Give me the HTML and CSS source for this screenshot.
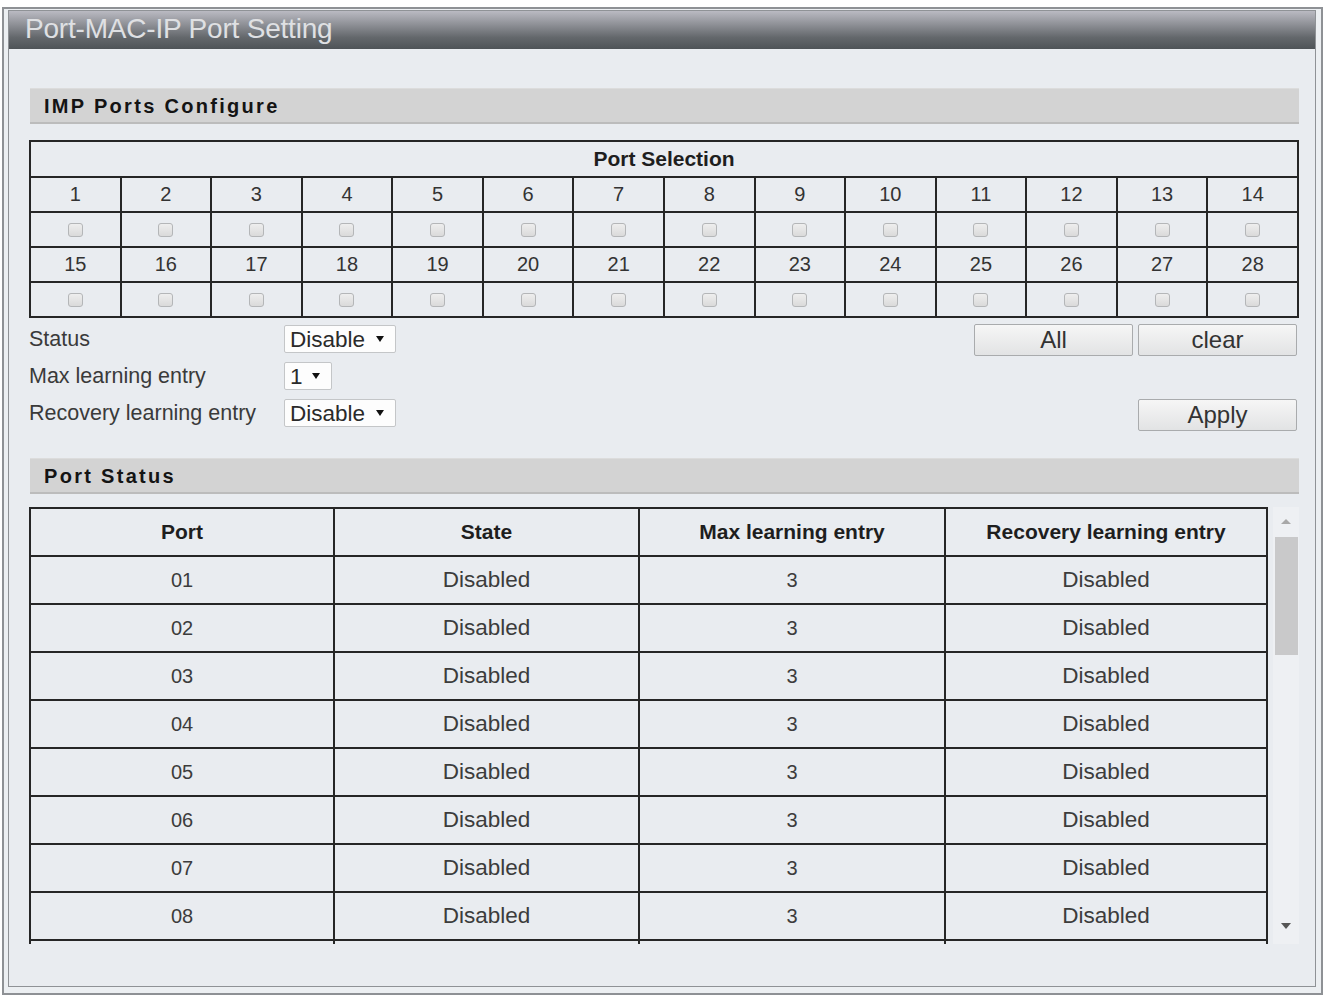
FILE: index.html
```html
<!DOCTYPE html>
<html lang="en">
<head>
    <meta charset="UTF-8">
    <meta name="viewport" content="width=device-width, initial-scale=1.0">
    <title>Port-MAC-IP Port Setting</title>
    <link rel="stylesheet" href="styles.css">
</head>
<body>

    <div class="window">
        <div class="panel">
            <div class="title-bar">Port-MAC-IP Port Setting</div>

            <div class="content">
                <!-- Configuracion de puertos -->
                <div class="section-bar">IMP Ports Configure</div>

                <table class="port-select">
                    <tr class="head-row"><th colspan="14">Port Selection</th></tr>
                    <tr class="num-row">
                        <td>1</td><td>2</td><td>3</td><td>4</td><td>5</td><td>6</td><td>7</td>
                        <td>8</td><td>9</td><td>10</td><td>11</td><td>12</td><td>13</td><td>14</td>
                    </tr>
                    <tr class="chk-row">
                        <td><input type="checkbox"></td><td><input type="checkbox"></td><td><input type="checkbox"></td><td><input type="checkbox"></td><td><input type="checkbox"></td><td><input type="checkbox"></td><td><input type="checkbox"></td>
                        <td><input type="checkbox"></td><td><input type="checkbox"></td><td><input type="checkbox"></td><td><input type="checkbox"></td><td><input type="checkbox"></td><td><input type="checkbox"></td><td><input type="checkbox"></td>
                    </tr>
                    <tr class="num-row">
                        <td>15</td><td>16</td><td>17</td><td>18</td><td>19</td><td>20</td><td>21</td>
                        <td>22</td><td>23</td><td>24</td><td>25</td><td>26</td><td>27</td><td>28</td>
                    </tr>
                    <tr class="chk-row">
                        <td><input type="checkbox"></td><td><input type="checkbox"></td><td><input type="checkbox"></td><td><input type="checkbox"></td><td><input type="checkbox"></td><td><input type="checkbox"></td><td><input type="checkbox"></td>
                        <td><input type="checkbox"></td><td><input type="checkbox"></td><td><input type="checkbox"></td><td><input type="checkbox"></td><td><input type="checkbox"></td><td><input type="checkbox"></td><td><input type="checkbox"></td>
                    </tr>
                </table>

                <div class="form-area">
                    <div class="form-fields">
                        <div class="field">
                            <label for="status">Status</label>
                            <div class="select wide">
                                <select id="status">
                                    <option>Disable</option>
                                    <option>Enable</option>
                                </select>
                            </div>
                        </div>
                        <div class="field">
                            <label for="max-entry">Max learning entry</label>
                            <div class="select narrow">
                                <select id="max-entry">
                                    <option>1</option>
                                    <option>2</option>
                                    <option>3</option>
                                    <option>4</option>
                                    <option>5</option>
                                </select>
                            </div>
                        </div>
                        <div class="field">
                            <label for="recovery">Recovery learning entry</label>
                            <div class="select wide">
                                <select id="recovery">
                                    <option>Disable</option>
                                    <option>Enable</option>
                                </select>
                            </div>
                        </div>
                    </div>
                    <div class="form-buttons">
                        <div class="btn-row">
                            <button>All</button>
                            <button>clear</button>
                        </div>
                        <div class="btn-row">
                            <button>Apply</button>
                        </div>
                    </div>
                </div>

                <!-- Estado de puertos -->
                <div class="section-bar">Port Status</div>

                <div class="status-box">
                    <div class="status-scroll">
                        <table class="port-status">
                            <tr>
                                <th class="col-port">Port</th>
                                <th class="col-state">State</th>
                                <th class="col-max">Max learning entry</th>
                                <th>Recovery learning entry</th>
                            </tr>
                            <tr><td class="num">01</td><td>Disabled</td><td class="num">3</td><td>Disabled</td></tr>
                            <tr><td class="num">02</td><td>Disabled</td><td class="num">3</td><td>Disabled</td></tr>
                            <tr><td class="num">03</td><td>Disabled</td><td class="num">3</td><td>Disabled</td></tr>
                            <tr><td class="num">04</td><td>Disabled</td><td class="num">3</td><td>Disabled</td></tr>
                            <tr><td class="num">05</td><td>Disabled</td><td class="num">3</td><td>Disabled</td></tr>
                            <tr><td class="num">06</td><td>Disabled</td><td class="num">3</td><td>Disabled</td></tr>
                            <tr><td class="num">07</td><td>Disabled</td><td class="num">3</td><td>Disabled</td></tr>
                            <tr><td class="num">08</td><td>Disabled</td><td class="num">3</td><td>Disabled</td></tr>
                            <tr class="filler"><td></td><td></td><td></td><td></td></tr>
                        </table>
                    </div>
                    <div class="scrollbar">
                        <div class="arrow-box top"><span class="arrow up"></span></div>
                        <div class="thumb"></div>
                        <div class="track"></div>
                        <div class="arrow-box bottom"><span class="arrow down"></span></div>
                    </div>
                </div>
            </div>
        </div>
    </div>

</body>
</html>
```

FILE: styles.css
```css
body {
    font-family: "Liberation Sans", Arial, sans-serif;
    background-color: #ffffff;
    margin: 0;
    padding: 0;
}
.window {
    margin: 7px 3px 0 2px;
    border: 2px solid #8e9195;
    padding: 1px 5px 6px 4px;
    background-color: #eceff2;
}
.panel {
    border: 1px solid #8f9296;
    background-color: #e9ecf0;
}
.title-bar {
    height: 38px;
    line-height: 36px;
    padding-left: 16px;
    font-size: 28px;
    letter-spacing: -0.2px;
    color: #dfe0e3;
    background: linear-gradient(to bottom, #babac2 0%, #8f9197 35%, #63676b 70%, #4e5357 100%);
}
.content {
    padding: 39px 16px 42px 20px;
}
.section-bar {
    height: 33px;
    line-height: 34px;
    margin-left: 1px;
    padding-left: 14px;
    background-color: #d3d3d3;
    border-top: 1px solid #dcdcdc;
    border-bottom: 2px solid #bcbcbc;
    font-size: 20px;
    font-weight: bold;
    letter-spacing: 2.3px;
    color: #141414;
}
table {
    border-collapse: collapse;
    table-layout: fixed;
    width: 100%;
}
.port-select {
    margin-top: 16px;
}
.port-select th, .port-select td {
    border: 2px solid #262626;
    text-align: center;
    padding: 0;
    color: #333;
}
.port-select .head-row {
    height: 36px;
}
.port-select th {
    font-size: 21px;
    font-weight: bold;
    color: #1e1e1e;
}
.num-row {
    height: 35px;
    font-size: 20px;
}
.chk-row {
    height: 35px;
}
input[type="checkbox"] {
    appearance: none;
    -webkit-appearance: none;
    display: block;
    margin: 0 auto;
    width: 15px;
    height: 14px;
    border: 1px solid #b4b6b8;
    border-radius: 3px;
    background: linear-gradient(to bottom, #eeeeee, #dadada);
}
.form-area {
    display: flex;
    justify-content: space-between;
    margin-top: 6px;
    height: 107px;
    margin-bottom: 27px;
}
.form-fields {
    display: flex;
    flex-direction: column;
    gap: 9px;
    padding-top: 1px;
}
.field {
    display: flex;
    align-items: center;
    height: 28px;
}
.field label {
    width: 255px;
    font-size: 21.5px;
    color: #3a3a3a;
}
.select {
    position: relative;
    height: 28px;
}
.select select {
    appearance: none;
    -webkit-appearance: none;
    height: 28px;
    padding: 0 0 0 5px;
    border: 1px solid #c4c6c8;
    border-radius: 2px;
    background-color: #fdfdfd;
    font-family: "Liberation Sans", Arial, sans-serif;
    font-size: 22.5px;
    color: #2a2a2a;
}
.select.wide select {
    width: 112px;
}
.select.narrow select {
    width: 48px;
}
.select::after {
    content: "";
    position: absolute;
    top: 11px;
    right: 12px;
    border-left: 4px solid transparent;
    border-right: 4px solid transparent;
    border-top: 6px solid #111;
    pointer-events: none;
}
.form-buttons {
    display: flex;
    flex-direction: column;
    align-items: flex-end;
    justify-content: space-between;
    padding-right: 2px;
}
.btn-row {
    display: flex;
    gap: 5px;
}
button {
    width: 159px;
    height: 32px;
    padding: 0;
    border: 1px solid #a9abad;
    border-radius: 2px;
    background: linear-gradient(to bottom, #f6f6f6, #e2e3e4);
    font-family: "Liberation Sans", Arial, sans-serif;
    font-size: 24px;
    color: #333;
    cursor: pointer;
}
button:hover {
    background: linear-gradient(to bottom, #ffffff, #e8e9ea);
}
.status-box {
    display: flex;
    margin-top: 13px;
    height: 437px;
}
.status-scroll {
    flex: 1;
    overflow: hidden;
    margin-right: 5px;
}
.port-status th, .port-status td {
    border: 2px solid #262626;
    height: 46px;
    text-align: center;
    padding: 0;
    font-size: 22.5px;
    color: #3c3c3c;
}
.port-status td.num {
    font-size: 20px;
}
.port-status th {
    font-size: 21px;
    font-weight: bold;
    color: #1e1e1e;
}
.port-status .filler td {
    border-bottom: none;
}
.col-port {
    width: 302px;
}
.col-state {
    width: 303px;
}
.col-max {
    width: 304px;
}
.scrollbar {
    width: 26px;
    display: flex;
    flex-direction: column;
    background-color: #eef0f3;
}
.arrow-box {
    display: flex;
    justify-content: center;
}
.arrow-box.top {
    height: 30px;
    padding-top: 12px;
    box-sizing: border-box;
}
.arrow-box.bottom {
    height: 36px;
    padding-top: 15px;
    box-sizing: border-box;
}
.arrow {
    width: 0;
    height: 0;
    border-left: 5px solid transparent;
    border-right: 5px solid transparent;
}
.arrow.up {
    border-bottom: 5px solid #a8a8a8;
}
.arrow.down {
    border-top: 6px solid #555;
}
.thumb {
    height: 118px;
    margin: 0 1px 0 2px;
    background-color: #c9c9ca;
}
.track {
    flex: 1;
}
```
